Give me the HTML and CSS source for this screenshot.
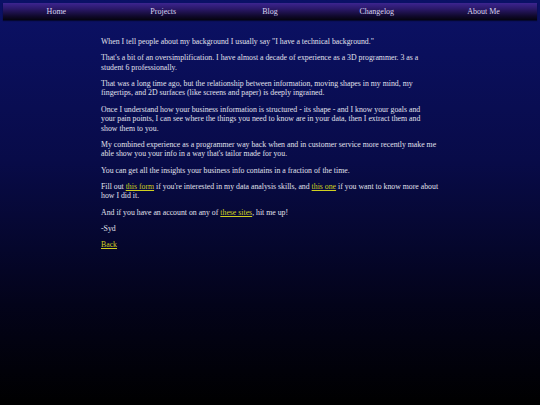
FILE: index.html
```html
<!DOCTYPE html>
<html lang="en">
<head>
<meta charset="utf-8">
<title>About Me</title>
<link rel="stylesheet" href="styles.css">
</head>
<body>
<nav class="nav">
  <a class="nav-item" href="#">Home</a>
  <a class="nav-item" href="#">Projects</a>
  <a class="nav-item" href="#">Blog</a>
  <a class="nav-item" href="#">Changelog</a>
  <a class="nav-item" href="#">About Me</a>
</nav>
<main class="content">
  <p>When I tell people about my background I usually say "I have a technical background."</p>
  <p>That's a bit of an oversimplification. I have almost a decade of experience as a 3D programmer. 3 as a student 6 professionally.</p>
  <p>That was a long time ago, but the relationship between information, moving shapes in my mind, my fingertips, and 2D surfaces (like screens and paper) is deeply ingrained.</p>
  <p>Once I understand how your business information is structured - its shape - and I know your goals and your&nbsp;pain points, I can see where the things you need to know are in your data, then I extract them and show&nbsp;them to you.</p>
  <p>My combined experience as a programmer way back when and in customer service more recently make me able show you your info in a way that's tailor made for you.</p>
  <p>You can get all the insights your business info contains in a fraction of the time.</p>
  <p>Fill out <a class="link" href="#">this form</a> if you're interested in my data analysis skills, and <a class="link" href="#">this one</a> if you want to know more about how I did it.</p>
  <p>And if you have an account on any of <a class="link" href="#">these sites</a>, hit me up!</p>
  <p>-Syd</p>
  <p><a class="link" href="#">Back</a></p>
</main>
</body>
</html>
```
FILE: styles.css
```css
html {
  min-height: 100%;
  background: linear-gradient(to bottom, #0b1166 0%, #080b48 40%, #03031a 75%, #000000 100%);
}
body {
  margin: 0;
  padding: 3px 3px 0;
  font-family: "Liberation Serif", "DejaVu Serif", serif;
  color: #e0e0ec;
  min-height: 405px;
  box-sizing: border-box;
}
.nav {
  display: grid;
  grid-template-columns: repeat(5, 1fr);
  height: 17px;
  background: linear-gradient(to bottom, #3d2590 0%, #2a1868 35%, #0e0828 80%, #05030f 100%);
  box-shadow: 0 1px 1px rgba(0,0,0,0.5);
}
.nav-item {
  display: flex;
  align-items: center;
  justify-content: center;
  color: #d8d4ee;
  text-decoration: none;
  font-size: 8px;
}
.content {
  width: 339px;
  margin: 0 auto 0 98px;
  padding-top: 17px;
  font-size: 7.8px;
  line-height: 9.4px;
}
.content p {
  margin: 0 0 6.9px;
}
.link {
  display: inline-block;
  color: #d0d020;
}
```
